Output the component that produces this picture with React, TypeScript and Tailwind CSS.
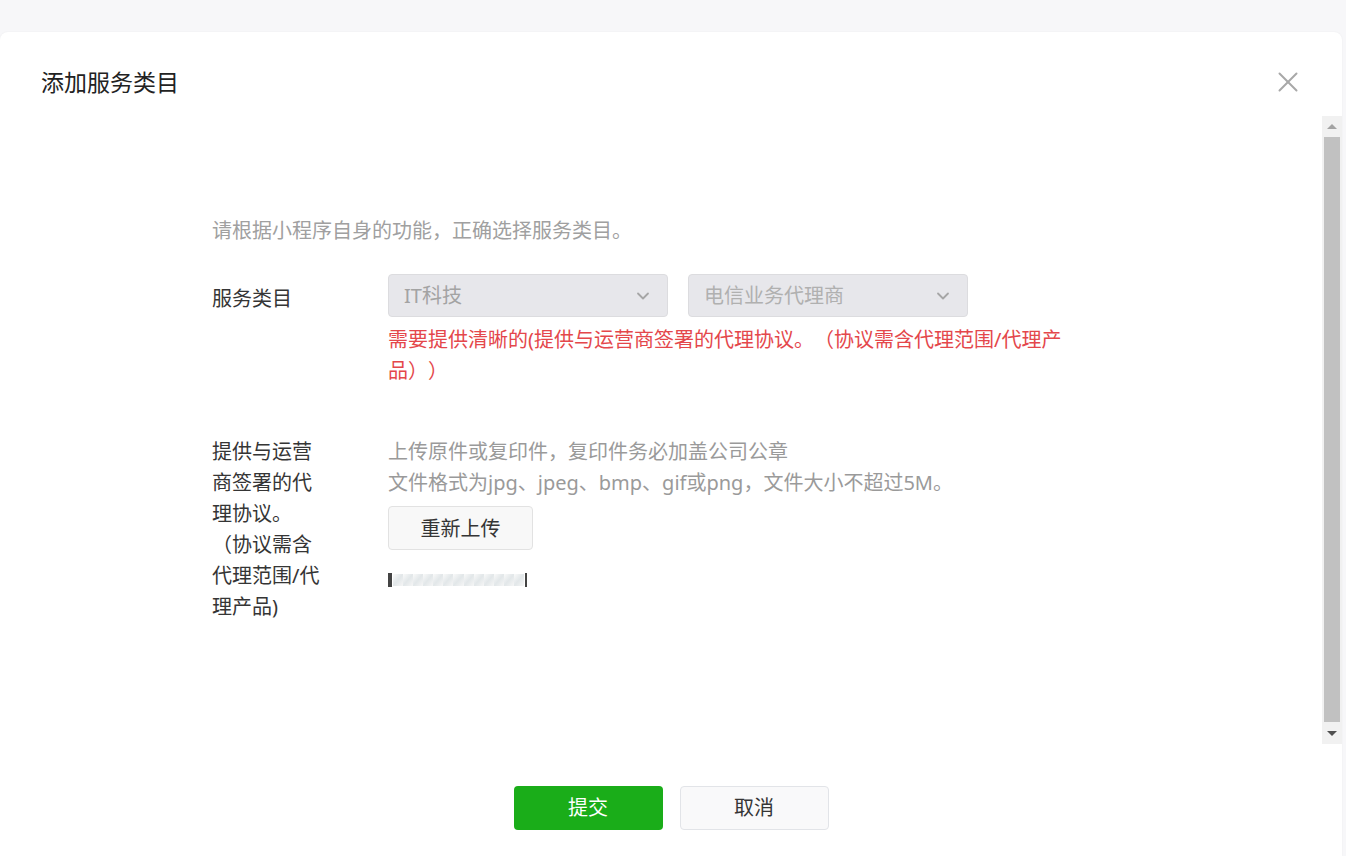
import { X, ChevronDown } from "lucide-react";

const font = { fontFamily: '"Noto Sans", "Noto Sans CJK SC", sans-serif' };

function Select({ value, light }: { value: string; light?: boolean }) {
  return (
    <div className="flex h-[43px] w-[280px] items-center justify-between rounded-[4px] border border-[#dcdcdf] bg-[#e7e7eb] pl-[15px] pr-[14px]">
      <span className={light ? "text-[#b0b0b0]" : "text-[#a3a3a3]"}>{value}</span>
      <ChevronDown size={20} strokeWidth={2.2} className="text-[#a6a6a6]" />
    </div>
  );
}

function Thumb() {
  return (
    <div className="flex h-[14px] w-[139px] items-center border-l-[4px] border-r-[2px] border-[#444] bg-white px-[1px]">
      {Array.from({ length: 13 }).map((_, i) => (
        <div key={i} className="h-[12px] flex-1 bg-gradient-to-br from-[#fafafa] via-[#e2e7e9] to-[#f6f6f6]" />
      ))}
    </div>
  );
}

function Scrollbar() {
  return (
    <div className="flex w-[20px] flex-col bg-[#f1f1f1]">
      <div className="flex h-[21px] items-center justify-center">
        <div className="h-0 w-0 border-x-[5px] border-b-[5px] border-x-transparent border-b-[#a3a3a3]" />
      </div>
      <div className="mx-[2px] flex-1 bg-[#c1c1c1]" />
      <div className="flex h-[22px] items-center justify-center">
        <div className="h-0 w-0 border-x-[5px] border-t-[5px] border-x-transparent border-t-[#505050]" />
      </div>
    </div>
  );
}

export default function App() {
  return (
    <div className="h-[856px] overflow-hidden bg-[#f7f7f9] pr-[4px] pt-[32px] [text-spacing-trim:space-all]" style={font}>
      <div className="flex h-[824px] flex-col rounded-t-[8px] bg-white shadow-[0_0_2px_rgba(0,0,0,0.06)]">
        <div className="flex h-[84px] items-start justify-between pl-[41px] pr-[37px] pt-[35px]">
          <h1 className="text-[23px] leading-[30px] text-[#222]">添加服务类目</h1>
          <X size={34} strokeWidth={1.4} className="-mt-[2px] text-[#a8a8a8]" />
        </div>

        <div className="flex h-[628px]">
          <div className="flex-1 pl-[212px] pt-[99px] text-[20px] leading-[31px]">
            <p className="text-[#a0a0a0]">请根据小程序自身的功能，正确选择服务类目。</p>

            <div className="mt-[28px] flex">
              <div className="w-[176px] pt-[9px] text-[#353535]">服务类目</div>
              <div>
                <div className="flex gap-[20px]">
                  <Select value="IT科技" />
                  <Select value="电信业务代理商" light />
                </div>
                <p className="mt-[7px] w-[690px] text-[#e4474b]">
                  需要提供清晰的(提供与运营商签署的代理协议。（协议需含代理范围/代理产品））
                </p>
              </div>
            </div>

            <div className="mt-[50px] flex">
              <div className="w-[176px] text-[#353535]">
                <p className="w-[116px]">提供与运营商签署的代理协议。（协议需含代理范围/代理产品)</p>
              </div>
              <div>
                <p className="text-[#9a9a9a]">上传原件或复印件，复印件务必加盖公司公章</p>
                <p className="text-[#9a9a9a]">文件格式为jpg、jpeg、bmp、gif或png，文件大小不超过5M。</p>
                <button className="mt-[8px] flex h-[44px] w-[145px] items-center justify-center rounded-[4px] border border-[#e2e2e2] bg-[#f8f8f8] text-[20px] text-[#353535]">
                  重新上传
                </button>
                <div className="mt-[23px]">
                  <Thumb />
                </div>
              </div>
            </div>
          </div>
          <Scrollbar />
        </div>

        <div className="flex justify-center gap-[17px] pt-[42px] text-[20px]">
          <button className="flex h-[44px] w-[149px] items-center justify-center rounded-[4px] bg-[#1aad19] text-white">
            提交
          </button>
          <button className="flex h-[44px] w-[149px] items-center justify-center rounded-[4px] border border-[#e2e4e8] bg-[#f9f9fa] text-[#353535]">
            取消
          </button>
        </div>
      </div>
    </div>
  );
}
